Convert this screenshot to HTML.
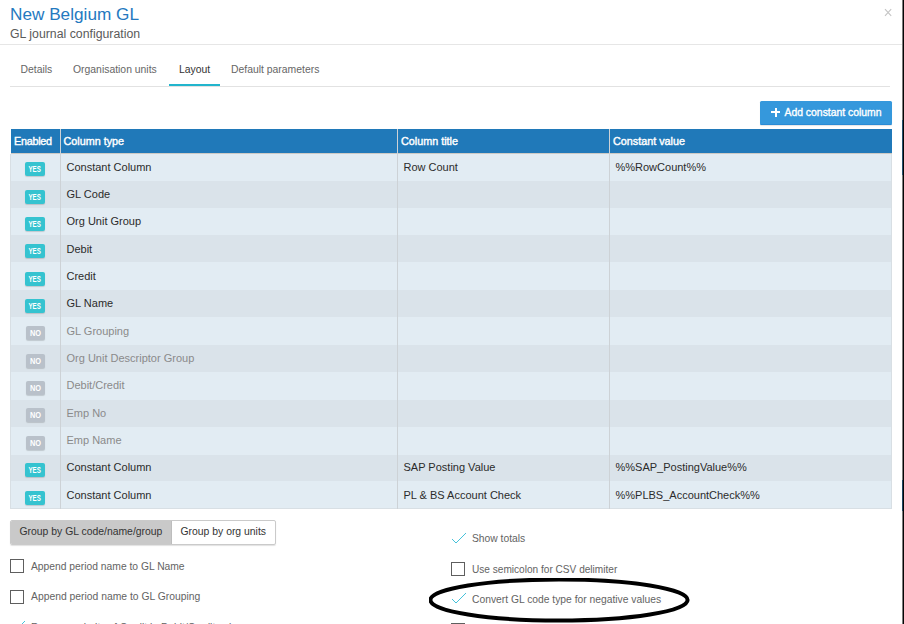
<!DOCTYPE html>
<html><head><meta charset="utf-8">
<style>
*{box-sizing:border-box;margin:0;padding:0}
html,body{width:904px;height:624px;overflow:hidden;background:#fff}
body{position:relative;font-family:"Liberation Sans",sans-serif;color:#333}
.a,.c,.badge,.vsep,.cb,.opt{position:absolute;white-space:nowrap;line-height:1}
#title{left:10px;top:5.6px;font-size:17.2px;color:#2479bf}
#sub{left:10px;top:27.7px;font-size:12.3px;color:#5a5a5a}
#close{left:884px;top:6px;font-size:14px;color:#c8c8c8}
#hline{left:0;top:44px;width:902px;height:1px;background:#e6e6e6}
#edge{left:902px;top:0;width:2px;height:624px;background:#111}
.tab{top:65px;font-size:10.4px;color:#666}
#tabline{left:10px;top:86px;width:880px;height:1px;background:#e2e2e2}
#tabact{left:168.5px;top:84px;width:51.5px;height:2px;background:#22b5cd}
#addbtn{left:760px;top:101px;width:132px;height:24px;background:#3598dc;border-radius:1.5px;color:#fff;border-bottom:1px solid #2a8bd5;box-shadow:0 1px 1px rgba(0,0,0,.10)}
#addbtn .plus{position:absolute;left:11px;top:6.8px;width:9px;height:9px}
#addbtn .plus:before{content:"";position:absolute;left:3.5px;top:0;width:2px;height:9px;background:#fff}
#addbtn .plus:after{content:"";position:absolute;left:0;top:3.5px;width:9px;height:2px;background:#fff}
#addbtn .t{position:absolute;left:24.5px;top:7px;font-size:10.4px;-webkit-text-stroke:0.35px #fff;letter-spacing:0}
.hdr{left:10.5px;top:129px;width:881px;height:25px;background:#2079b9;border-bottom:1px solid #cdcac5}
.hdr div{position:absolute;top:6.7px;color:#fff;font-size:10.8px;-webkit-text-stroke:0.4px #fff}
.vsep{width:1px;background:#cdd2d6}
.c{font-size:11px;color:#2b2b2b}
.c.dis{color:#8a8a8a}
.badge{left:25px;width:20px;height:14px;border-radius:2px;background:#35c3d0;color:#fff;font-size:8.6px;font-weight:bold;text-align:center;line-height:14.2px;box-shadow:0 1px 1px rgba(0,0,0,.15)}
.badge span{display:inline-block;transform:scaleX(0.72);transform-origin:50% 50%}
.badge.no{left:26px;width:19px;background:#b9c1ca}
.badge.no span{transform:scaleX(0.86)}
#grp{left:10px;top:520px;width:266px;height:24.5px;border:1px solid #cacaca;border-radius:2px;box-shadow:0 1px 1px rgba(0,0,0,.12);overflow:hidden}
#grp .l{position:absolute;left:0;top:0;width:161px;height:100%;background:#c9c9c9;border-right:1px solid #bdbdbd}
#grp .t{position:absolute;top:6.2px;font-size:10.4px;color:#333;line-height:1}
.cb{width:14px;height:14px;border:1px solid #5e5e5e;background:#fff}
.opt{font-size:10.3px;color:#636363}
</style></head><body>
<div id="title" class="a">New Belgium GL</div>
<div id="sub" class="a">GL journal configuration</div>
<svg class="a" style="left:884px;top:8px" width="9" height="9" viewBox="0 0 9 9"><path d="M1 1.2L7.2 7.8M7.2 1.2L1 7.8" stroke="#c4c4c4" stroke-width="1.1" fill="none"/></svg>
<div id="hline" class="a"></div>
<div class="a" style="left:902px;top:0;width:1px;height:624px;background:#7c7c7c"></div><div class="a" style="left:903px;top:0;width:1px;height:624px;background:#050505"></div><div class="a" style="left:902px;top:120px;width:1px;height:55px;background:#25506f"></div><div class="a" style="left:902px;top:480px;width:1px;height:31px;background:#1f4664"></div>

<div class="a tab" style="left:20.5px">Details</div>
<div class="a tab" style="left:73px">Organisation units</div>
<div class="a tab" style="left:179px;color:#333">Layout</div>
<div class="a tab" style="left:231px">Default parameters</div>
<div id="tabline" class="a"></div>
<div id="tabact" class="a"></div>

<div id="addbtn" class="a"><span class="plus"></span><span class="t">Add constant column</span></div>

<div class="a" style="left:10px;top:153.5px;width:882px;height:355.70px;background:#e2ecf3;border:1px solid #d8dfe4;border-top:0"></div>
<div class="a" style="left:11px;top:181.0px;width:880px;height:27.40px;background:#dae3ea"></div>
<div class="a" style="left:11px;top:235.2px;width:880px;height:27.30px;background:#dae3ea"></div>
<div class="a" style="left:11px;top:289.9px;width:880px;height:27.30px;background:#dae3ea"></div>
<div class="a" style="left:11px;top:345.0px;width:880px;height:27.00px;background:#dae3ea"></div>
<div class="a" style="left:11px;top:400.0px;width:880px;height:27.00px;background:#dae3ea"></div>
<div class="a" style="left:11px;top:454.8px;width:880px;height:25.90px;background:#dae3ea"></div>
<div class="badge" style="top:162px"><span>YES</span></div>
<div class="c" style="left:66.5px;top:162px">Constant Column</div>
<div class="c" style="left:403.5px;top:162px">Row Count</div>
<div class="c" style="left:615.5px;top:162px">%%RowCount%%</div>
<div class="badge" style="top:190px"><span>YES</span></div>
<div class="c" style="left:66.5px;top:189px">GL Code</div>
<div class="badge" style="top:217px"><span>YES</span></div>
<div class="c" style="left:66.5px;top:216px">Org Unit Group</div>
<div class="badge" style="top:244px"><span>YES</span></div>
<div class="c" style="left:66.5px;top:244px">Debit</div>
<div class="badge" style="top:272px"><span>YES</span></div>
<div class="c" style="left:66.5px;top:271px">Credit</div>
<div class="badge" style="top:299px"><span>YES</span></div>
<div class="c" style="left:66.5px;top:298px">GL Name</div>
<div class="badge no" style="top:326px"><span>NO</span></div>
<div class="c dis" style="left:66.5px;top:326px">GL Grouping</div>
<div class="badge no" style="top:354px"><span>NO</span></div>
<div class="c dis" style="left:66.5px;top:353px">Org Unit Descriptor Group</div>
<div class="badge no" style="top:381px"><span>NO</span></div>
<div class="c dis" style="left:66.5px;top:380px">Debit/Credit</div>
<div class="badge no" style="top:408px"><span>NO</span></div>
<div class="c dis" style="left:66.5px;top:408px">Emp No</div>
<div class="badge no" style="top:436px"><span>NO</span></div>
<div class="c dis" style="left:66.5px;top:435px">Emp Name</div>
<div class="badge" style="top:463px"><span>YES</span></div>
<div class="c" style="left:66.5px;top:462px">Constant Column</div>
<div class="c" style="left:403.5px;top:462px">SAP Posting Value</div>
<div class="c" style="left:615.5px;top:462px">%%SAP_PostingValue%%</div>
<div class="badge" style="top:491px"><span>YES</span></div>
<div class="c" style="left:66.5px;top:490px">Constant Column</div>
<div class="c" style="left:403.5px;top:490px">PL &amp; BS Account Check</div>
<div class="c" style="left:615.5px;top:490px">%%PLBS_AccountCheck%%</div>
<div class="a hdr">
  <div style="left:3.5px;letter-spacing:-0.25px">Enabled</div>
  <div style="left:53px">Column type</div>
  <div style="left:390.5px">Column title</div>
  <div style="left:602.5px">Constant value</div>
</div>
<div class="vsep" style="left:60px;top:129px;height:380.18px"></div>
<div class="vsep" style="left:397px;top:129px;height:380.18px"></div>
<div class="vsep" style="left:609px;top:129px;height:380.18px"></div>


<div id="grp" class="a"><div class="l"></div>
 <div class="t" style="left:8.5px">Group by GL code/name/group</div>
 <div class="t" style="left:169.5px">Group by org units</div>
</div>

<div class="cb" style="left:10px;top:559px"></div>
<div class="opt" style="left:31px;top:561.5px">Append period name to GL Name</div>
<div class="cb" style="left:10px;top:589.6px"></div>
<div class="opt" style="left:31px;top:592px;font-size:10.35px">Append period name to GL Grouping</div>
<div class="opt" style="left:31px;top:622.6px">Reverse polarity of Credit in Debit/Credit column</div>
<svg class="a" style="left:10px;top:620px" width="16" height="12" viewBox="0 0 16 12"><path d="M1 7 L5 11 L15 1" fill="none" stroke="#45c2da" stroke-width="1"/></svg>

<svg class="a" style="left:451px;top:532px" width="16" height="12" viewBox="0 0 16 12"><path d="M1 7 L5 11 L15 1" fill="none" stroke="#45c2da" stroke-width="1"/></svg>
<div class="opt" style="left:472px;top:534px">Show totals</div>
<div class="cb" style="left:451px;top:562px"></div>
<div class="opt" style="left:472px;top:564.5px;font-size:10.1px">Use semicolon for CSV delimiter</div>
<svg class="a" style="left:451px;top:592px" width="16" height="12" viewBox="0 0 16 12"><path d="M1 7 L5 11 L15 1" fill="none" stroke="#45c2da" stroke-width="1"/></svg>
<div class="opt" style="left:472px;top:594.5px">Convert GL code type for negative values</div>
<div class="cb" style="left:451px;top:622.5px"></div>

<svg class="a" style="left:429px;top:578px" width="262" height="46" viewBox="0 0 262 46"><ellipse cx="130" cy="22" rx="128.6" ry="20.5" fill="none" stroke="#000" stroke-width="4"/></svg>
</body></html>
